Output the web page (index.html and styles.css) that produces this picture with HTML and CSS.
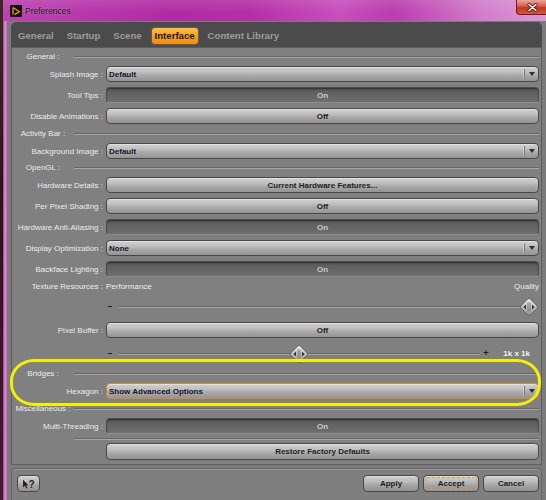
FILE: index.html
```html
<!DOCTYPE html>
<html>
<head>
<meta charset="utf-8">
<title>Preferences</title>
<link rel="stylesheet" href="styles.css">
</head>
<body>
<div class="screen">
  <div class="desk"></div>
  <div class="window">
    <div class="titlebar">
      <svg class="appicon" width="12" height="12" viewBox="0 0 12 12">
        <rect x="0" y="0" width="12" height="12" rx="1" fill="#111"/>
        <path d="M3 2.5 V9.5 M3 2.5 L9.5 6.8 L4.5 9.6" fill="none" stroke="#f29a1c" stroke-width="1.3" stroke-linejoin="round"/>
      </svg>
      <span class="title">Preferences</span>
      <div class="close">
        <svg width="11" height="9" viewBox="0 0 11 9">
          <path d="M2 1.5 L9 7.5 M9 1.5 L2 7.5" stroke="#5a1a14" stroke-width="3.2" stroke-linecap="round"/>
          <path d="M2 1.5 L9 7.5 M9 1.5 L2 7.5" stroke="#ffffff" stroke-width="1.6" stroke-linecap="round"/>
        </svg>
      </div>
    </div>
    <div class="client">
      <div class="tabs">
        <span class="tab">General</span>
        <span class="tab">Startup</span>
        <span class="tab">Scene</span>
        <span class="tab active">Interface</span>
        <span class="tab">Content Library</span>
      </div>
      <div class="panel">
        <div class="heading"><span>General :</span><i class="groove"></i></div>
        <div class="row"><label>Splash Image :</label><div class="ctl combo"><span>Default</span><b class="arrow"></b></div></div>
        <div class="row"><label>Tool Tips :</label><div class="ctl btn down">On</div></div>
        <div class="row"><label>Disable Animations :</label><div class="ctl btn">Off</div></div>

        <div class="heading"><span>Activity Bar :</span><i class="groove"></i></div>
        <div class="row"><label>Background Image :</label><div class="ctl combo"><span>Default</span><b class="arrow"></b></div></div>

        <div class="heading short"><span>OpenGL :</span><i class="groove"></i></div>
        <div class="row"><label>Hardware Details :</label><div class="ctl btn">Current Hardware Features...</div></div>
        <div class="row"><label>Per Pixel Shading :</label><div class="ctl btn">Off</div></div>
        <div class="row"><label>Hardware Anti-Aliasing :</label><div class="ctl btn down">On</div></div>
        <div class="row"><label>Display Optimization :</label><div class="ctl combo"><span>None</span><b class="arrow"></b></div></div>
        <div class="row"><label>Backface Lighting :</label><div class="ctl btn down">On</div></div>
        <div class="row texture"><label>Texture Resources :</label><div class="ends"><span>Performance</span><span>Quality</span></div></div>
        <div class="row slider"><span></span>
          <div class="track">
            <i class="minus"></i>
            <div class="rail end"><i class="groove"></i>
              <svg class="thumb" style="left:100%" width="19" height="18" viewBox="0 0 19 18">
                <defs><linearGradient id="tg1" x1="0" y1="0" x2="0" y2="1"><stop offset="0" stop-color="#efefef"/><stop offset="0.5" stop-color="#c4c4c4"/><stop offset="1" stop-color="#8e8e8e"/></linearGradient></defs>
                <path d="M8.3 1 Q9.5 0 10.7 1 L17.5 7.8 Q18.6 9 17.5 10.2 L10.7 17 Q9.5 18 8.3 17 L1.5 10.2 Q0.4 9 1.5 7.8 Z" fill="url(#tg1)" stroke="#555" stroke-width="0.8"/>
                <path d="M8.5 4.5 V13.5 M10.5 4.5 V13.5" stroke="#6a6a6a" stroke-width="0.9"/>
                <path d="M6.5 6.5 L3.8 9 L6.5 11.5 Z M12.5 6.5 L15.2 9 L12.5 11.5 Z" fill="#333"/>
              </svg>
            </div>
          </div>
        </div>
        <div class="row"><label>Pixel Buffer :</label><div class="ctl btn">Off</div></div>
        <div class="row slider"><span></span>
          <div class="track">
            <i class="minus"></i>
            <div class="rail"><i class="groove"></i>
              <svg class="thumb" style="left:50%" width="19" height="18" viewBox="0 0 19 18">
                <defs><linearGradient id="tg2" x1="0" y1="0" x2="0" y2="1"><stop offset="0" stop-color="#efefef"/><stop offset="0.5" stop-color="#c4c4c4"/><stop offset="1" stop-color="#8e8e8e"/></linearGradient></defs>
                <path d="M8.3 1 Q9.5 0 10.7 1 L17.5 7.8 Q18.6 9 17.5 10.2 L10.7 17 Q9.5 18 8.3 17 L1.5 10.2 Q0.4 9 1.5 7.8 Z" fill="url(#tg2)" stroke="#555" stroke-width="0.8"/>
                <path d="M8.5 4.5 V13.5 M10.5 4.5 V13.5" stroke="#6a6a6a" stroke-width="0.9"/>
                <path d="M6.5 6.5 L3.8 9 L6.5 11.5 Z M12.5 6.5 L15.2 9 L12.5 11.5 Z" fill="#333"/>
              </svg>
            </div>
            <span class="plus">+</span>
            <span class="value">1k x 1k</span>
          </div>
        </div>

        <div class="heading"><span>Bridges :</span><i class="groove"></i></div>
        <div class="row"><label>Hexagon :</label><div class="ctl combo focus"><span>Show Advanced Options</span><b class="arrow"></b></div></div>

        <div class="heading"><span>Miscellaneous :</span><i class="groove"></i></div>
        <div class="row"><label>Multi-Threading :</label><div class="ctl btn down">On</div></div>
        <div class="sep"><i class="groove"></i></div>
        <div class="row tall"><span></span><div class="ctl btn">Restore Factory Defaults</div></div>
      </div>
      <div class="footer">
        <div class="fbtn help">
          <svg width="7" height="10" viewBox="0 0 7 10"><path d="M1 0.8 L1 8.6 L2.9 6.8 L4.3 9.6 L5.4 9 L4.1 6.3 L6.4 6.2 Z" fill="#222"/></svg>
          <span>?</span>
        </div>
        <div class="actions">
          <div class="fbtn">Apply</div>
          <div class="fbtn accept">Accept</div>
          <div class="fbtn">Cancel</div>
        </div>
      </div>
    </div>
  </div>
</div>
<div class="highlight"></div>
</body>
</html>
```

FILE: styles.css
```css
* { box-sizing: border-box; }
html, body { margin: 0; padding: 0; }
body {
  width: 546px;
  height: 500px;
  overflow: hidden;
  position: relative;
  background: #2a1814;
  font-family: "Liberation Sans", Arial, sans-serif;
  font-size: 8px;
}
.screen { display: flex; height: 500px; }
.desk { width: 3px; flex: none; background: linear-gradient(#3b2a22, #2a1613 40%, #3a2030); }
.window {
  flex: 1;
  min-width: 0;
  display: flex;
  flex-direction: column;
  background-color: #b93fad;
  background-image: linear-gradient(to right, #97328b, #e892dd 2px, #c55ab9 4px);
  background-size: 4px 100%;
  background-repeat: no-repeat;
}
.titlebar {
  height: 21px;
  flex: none;
  display: flex;
  align-items: center;
  padding-left: 7px;
  background:
    linear-gradient(rgba(255,255,255,0.10), rgba(255,255,255,0) 60%),
    linear-gradient(to right, #bd42b1 0%, #b12ca4 30%, #b42ea7 45%, #c84fbc 62%, #bb3caf 72%, #d27ccb 88%, #dc9ad6 100%);
}
.appicon { flex: none; }
.title {
  margin-left: 3px;
  font-size: 8.5px;
  color: #141414;
  text-shadow: 0 0 3px rgba(255,255,255,0.45);
}
.close {
  margin-left: auto;
  align-self: flex-start;
  width: 30px;
  height: 15px;
  border: 1px solid #6b1e1a;
  border-top: none;
  border-right: none;
  border-radius: 0 0 0 4px;
  background: linear-gradient(#eaa79b, #d9594a 45%, #c33423 55%, #cf5a3e);
  display: flex;
  align-items: center;
  justify-content: center;
  padding-left: 2px;
}
.client {
  flex: 1;
  margin-left: 4px;
  background: #7b7b7b;
  padding: 1px 4px 0 4px;
  display: flex;
  flex-direction: column;
}
.tabs {
  height: 25px;
  flex: none;
  background: #4b4b4b;
  border-radius: 5px 5px 0 0;
  display: flex;
  align-items: flex-end;
  gap: 7px;
  padding: 0 0 3px 4px;
}
.tab {
  height: 16px;
  line-height: 16px;
  padding: 0 3px;
  font-size: 9.6px;
  font-weight: bold;
  color: #9d9d9d;
  border-radius: 3px;
}
.tab.active {
  color: #1b1b1b;
  background: linear-gradient(#ffc04a, #f7a020 50%, #ee900f);
  box-shadow: 0 0 2px rgba(255,170,40,0.6);
}
.panel {
  flex: none;
  background: #808080;
  border: 1px solid #5d5d5d;
  padding: 4px 2px 4px 0;
  display: flex;
  flex-direction: column;
  gap: 5px;
}
.groove {
  display: block;
  height: 2px;
  border-top: 1px solid #676767;
  border-bottom: 1px solid #a5a5a5;
}
.heading {
  height: 9px;
  display: grid;
  grid-template-columns: 62px 1fr;
  align-items: center;
  color: #ececec;
  line-height: 9px;
}
.heading.short { height: 8px; line-height: 8px; }
.heading span { text-align: center; white-space: nowrap; }
.row {
  height: 16px;
  display: grid;
  grid-template-columns: 91px 1fr;
  column-gap: 3px;
  align-items: center;
}
.row.tall { height: 17px; margin-top: -1px; }
.row label {
  text-align: right;
  color: #ececec;
  white-space: nowrap;
}
.ctl {
  height: 100%;
  border-radius: 4px;
  display: flex;
  align-items: center;
  font-weight: bold;
  white-space: nowrap;
}
.btn {
  justify-content: center;
  border: 1px solid #484848;
  background: linear-gradient(#d2d2d2, #bcbcbc 40%, #a9a9a9 60%, #949494);
  box-shadow: inset 0 1px 0 rgba(255,255,255,0.35);
  color: #1f1f1f;
}
.btn.down {
  border: 1px solid #4a4a4a;
  border-bottom-color: #8c8c8c;
  background: linear-gradient(#4a4a4a, #5f5f5f 25%, #686868 70%, #6f6f6f);
  box-shadow: inset 0 1px 1px rgba(0,0,0,0.35);
  color: #c9c9c9;
}
.combo {
  border: 1px solid #484848;
  background: linear-gradient(#d2d2d2, #bcbcbc 40%, #a9a9a9 60%, #949494);
  box-shadow: inset 0 1px 0 rgba(255,255,255,0.35);
  color: #16162a;
  padding-left: 2px;
}
.combo.focus { border-color: #d38b2e; }
.combo span { flex: 1; }
.arrow {
  width: 14px;
  height: 10px;
  border-left: 1px solid #7a7a7a;
  box-shadow: -1px 0 0 rgba(255,255,255,0.35);
  display: flex;
  align-items: center;
  justify-content: center;
}
.arrow::after {
  content: "";
  border-left: 3px solid transparent;
  border-right: 3px solid transparent;
  border-top: 4px solid #2e2e2e;
}
.texture { height: 9px; }
.ends {
  display: flex;
  justify-content: space-between;
  color: #ececec;
  white-space: nowrap;
}
.slider { height: 21px; }
.track {
  display: flex;
  align-items: center;
  height: 100%;
}
.minus {
  display: block;
  width: 4px;
  height: 1.5px;
  background: #1e1e1e;
  margin: 0 6px 0 2px;
}
.rail {
  flex: 1;
  position: relative;
  height: 2px;
}
.rail.end { margin-right: 10px; }
.thumb {
  position: absolute;
  top: 50%;
  transform: translate(-50%, -50%);
}
.plus {
  width: 5px;
  margin-left: 3px;
  font-weight: bold;
  font-size: 9px;
  color: #1a1a1a;
  line-height: 9px;
  text-align: center;
}
.value {
  margin-left: 15px;
  padding-right: 9px;
  font-weight: bold;
  color: #f2f2f2;
  white-space: nowrap;
}
.sep {
  height: 2px;
  margin: -1px 0;
  padding-left: 62px;
}
.footer {
  flex: 1;
  margin-top: 3px;
  background: #7f7f7f;
  border: 1px solid #676767;
  border-bottom: none;
  border-radius: 4px 4px 0 0;
  box-shadow: inset 0 1px 0 #969696;
  display: flex;
  align-items: flex-start;
  padding: 6px 2px 0 5px;
}
.fbtn {
  height: 17px;
  width: 56px;
  border: 1px solid #474747;
  border-radius: 4px;
  background: linear-gradient(#d0d0d0, #bababa 40%, #a6a6a6 60%, #919191);
  box-shadow: inset 0 1px 0 rgba(255,255,255,0.35);
  display: flex;
  align-items: center;
  justify-content: center;
  font-weight: bold;
  color: #1e1e1e;
}
.fbtn.help {
  width: 23px;
  gap: 0;
  font-size: 10px;
  padding-top: 1px;
}
.fbtn.help span { margin-left: -1px; }
.fbtn.accept {
  outline: 1px dashed #e49a3a;
  outline-offset: -3px;
}
.actions {
  margin-left: auto;
  display: flex;
  gap: 4px;
}
.highlight {
  position: absolute;
  left: 10px;
  top: 359px;
  width: 531px;
  height: 47px;
  border: 3px solid #f3f000;
  border-radius: 24px / 22px;
  pointer-events: none;
}
```
